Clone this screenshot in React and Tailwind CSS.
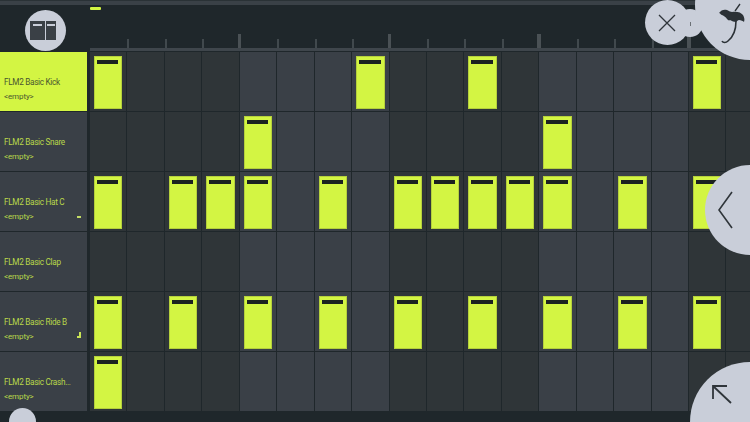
import React from 'react';

const channels = [
  { name: 'FLM2 Basic Kick', steps: [0, 7, 10, 16], selected: true },
  { name: 'FLM2 Basic Snare', steps: [4, 12] },
  { name: 'FLM2 Basic Hat C', steps: [0, 2, 3, 4, 6, 8, 9, 10, 11, 12, 14, 16], mark: 'hat' },
  { name: 'FLM2 Basic Clap', steps: [] },
  { name: 'FLM2 Basic Ride B', steps: [0, 2, 4, 6, 8, 10, 12, 14, 16], mark: 'ride' },
  { name: 'FLM2 Basic Crash...', steps: [0] },
];

const columns = Array.from({ length: 18 }, (_, i) => i);

// every 4 steps the shade of the column flips
const isLight = (i) => Math.floor(i / 4) % 2 === 1;

const Step = ({ index, on }) => (
  <div className={`h-full w-full pt-[4px] pb-[2px] pl-[4px] pr-[4px] ${isLight(index) ? 'bg-[#3a4047]' : 'bg-[#2f3538]'}`}>
    {on && (
      <div className="h-full w-full bg-[#d3f543] border border-[#b5d03c] pt-[3px] pl-[2px] pr-[3px]">
        <div className="h-[4px] w-full bg-[#1c2220]" />
      </div>
    )}
  </div>
);

const ChannelLabel = ({ channel }) => (
  <div
    className={`relative h-full flex flex-col pl-[4px] pt-[24px] ${
      channel.selected ? 'bg-[#d3f543] text-[#4a5530]' : 'bg-[#3a4047] text-[#b9d84a]'
    }`}
  >
    <span className="text-[8.2px] tracking-[-0.3px] leading-[12px] whitespace-nowrap">{channel.name}</span>
    <span className="mt-[3px] text-[8px] tracking-[-0.1px] leading-[12px]">&lt;empty&gt;</span>
    {channel.mark === 'hat' && <div className="absolute right-[6px] bottom-[13px] h-[2px] w-[4px] bg-[#c3dd66]" />}
    {channel.mark === 'ride' && (
      <div className="absolute right-[6px] bottom-[13px] h-[6px] w-[4px] border-r-2 border-b-2 border-[#c9e455]" />
    )}
  </div>
);

const Ruler = () => (
  <div className="grid grid-cols-[repeat(18,37.44px)] h-full items-end">
    {columns.map((i) => (
      <div key={i} className="h-[15px] flex items-end">
        {i > 0 && (
          <div className={i % 4 === 0 ? '-ml-[2px] h-[14px] w-[3.5px] bg-[#4a5155]' : 'h-[9px] w-[2px] bg-[#41494d]'} />
        )}
      </div>
    ))}
  </div>
);

export default function App() {
  return (
    <div className="relative w-[750px] h-[422px] overflow-hidden bg-[#1f272b] flex flex-col font-['Roboto',sans-serif]">
      <div className="h-[1px] bg-[#2a3236]" />
      <div className="h-[4px] bg-[#3a4147]" />

      {/* top strip with ruler */}
      <div className="h-[43px] flex">
        <div className="w-[90px] shrink-0" />
        <div className="relative flex-1">
          <div className="absolute left-0 top-[2px] h-[3px] w-[11px] rounded-[1px] bg-[#d3f543]" />
          <Ruler />
        </div>
      </div>
      <div className="h-[4px] flex">
        <div className="w-[90px] shrink-0" />
        <div className="flex-1 h-[3px] bg-[#3f464c]" />
      </div>

      {/* channel rack */}
      <div className="flex flex-col gap-[1px] h-[360px]">
        {channels.map((channel) => (
          <div key={channel.name} className="flex h-[59px]">
            <div className="w-[87px] shrink-0">
              <ChannelLabel channel={channel} />
            </div>
            <div className="w-[3px] shrink-0" />
            <div className="grid grid-cols-[repeat(18,37.44px)]">
              {columns.map((i) => (
                <div key={i} className="h-[59px] pr-[1px]">
                  <Step index={i} on={channel.steps.includes(i)} />
                </div>
              ))}
            </div>
          </div>
        ))}
      </div>

      {/* round buttons floating over the rack */}
      <div className="absolute left-[25px] top-[10px] w-[41px] h-[41px] rounded-full bg-[#c9ced9] flex items-center justify-center gap-[1px] pr-[5px]">
        <div className="w-[15px] h-[19px] bg-[#3a4046] pt-[3px] px-[3px]"><div className="h-[2px] bg-[#c9ced9]" /></div>
        <div className="w-[10px] h-[19px] bg-[#3a4046] pt-[3px] px-[1px]"><div className="h-[2px] bg-[#c9ced9]" /></div>
      </div>

      <div className="absolute left-[645px] top-0 w-[45px] h-[45px] rounded-full bg-[#c9ced9] flex items-center justify-center pr-[1px]">
        <svg width="18" height="18" viewBox="0 0 18 18" fill="none" stroke="#2f353a" strokeWidth="1.3">
          <path d="M1 1 17 17M17 1 1 17" />
        </svg>
      </div>
      <div className="absolute left-[677px] top-[9px] w-[26px] h-[28px] rounded-full bg-[#c9ced9] flex items-center justify-center">
        <div className="mt-[2px] h-[4px] w-[1px] bg-[#6b7076]" />
      </div>
      <div className="absolute left-[695px] -top-[50px] w-[110px] h-[110px] rounded-full bg-[#c9ced9]" />
      <svg className="absolute left-[700px] top-0" width="50" height="50" viewBox="0 0 50 50" fill="none">
        <path d="M19 13c2-3 5-4 8-3 2 1 4 2 5 2 4-1 9 0 11 3 1 2 2 4 1 7-1-1-3-2-5-2-1 0-2 1-3 2-2 0-4-1-6-2-1 1-2 0-3-1-1-2-3-3-5-4-1 0-2-2-3-2z" fill="#2b3136" />
        <path d="M40 4 35 11" stroke="#2b3136" strokeWidth="1.3" />
        <path d="M36 21c0 8-3 16-8 20-2 2-5 2-6 0" stroke="#2b3136" strokeWidth="1.6" />
      </svg>

      <div className="absolute left-[705px] top-[165px] w-[90px] h-[90px] rounded-full bg-[#c9ced9]" />
      <svg className="absolute left-[717px] top-[190px]" width="18" height="40" viewBox="0 0 18 40" fill="none" stroke="#2f353a" strokeWidth="1.6">
        <path d="M15 2 2 20 15 38" />
      </svg>

      <div className="absolute left-[690px] top-[362px] w-[120px] h-[120px] rounded-full bg-[#c9ced9]" />
      <svg className="absolute left-[711px] top-[384px]" width="22" height="22" viewBox="0 0 22 22" fill="none" stroke="#2f353a" strokeWidth="1.8">
        <path d="M2 15V2H16M2 2 20 19" />
      </svg>

      <div className="absolute left-[9px] top-[408px] w-[27px] h-[27px] rounded-full bg-[#c9ced9]" />
    </div>
  );
}
